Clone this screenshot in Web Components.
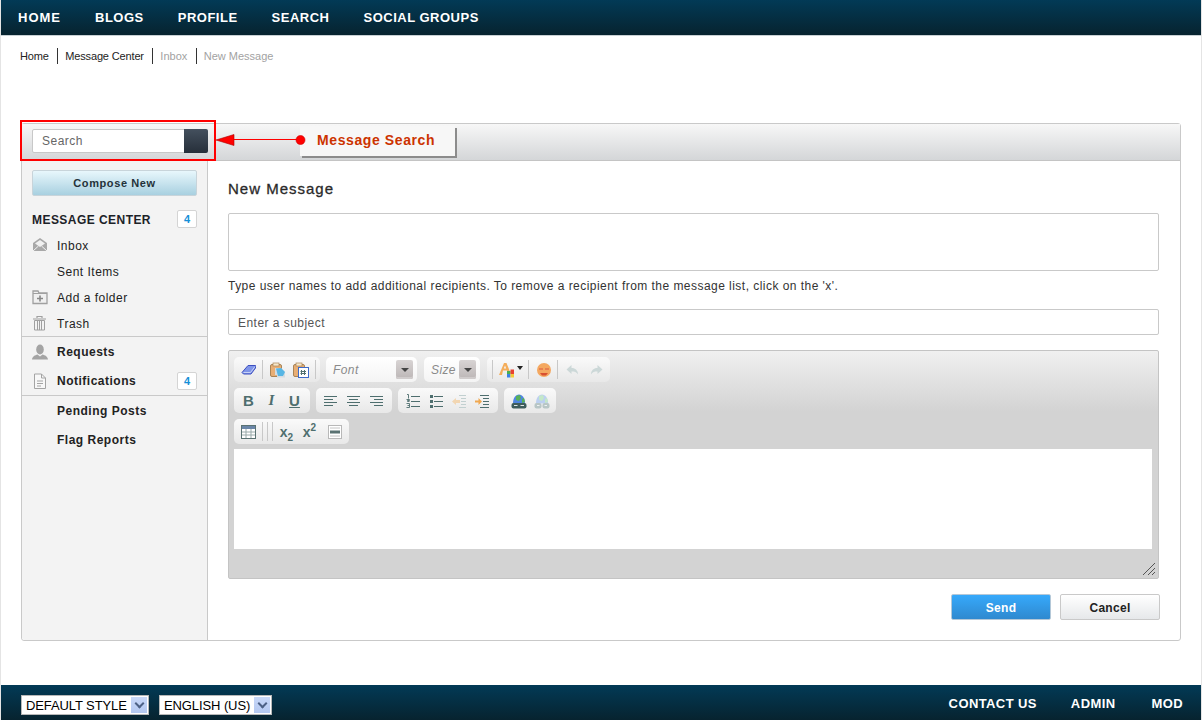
<!DOCTYPE html>
<html lang="en">
<head>
<meta charset="utf-8">
<title>New Message</title>
<style>
  html, body { margin: 0; height: 100%; }
  body {
    font-family: "Liberation Sans", Arial, sans-serif;
    font-size: 12px;
    color: #333;
    background: #fff;
    overflow: hidden;
  }
</style>
</head>
<body>
<app-shell>
  <app-nav slot="top" links="HOME,BLOGS,PROFILE,SEARCH,SOCIAL GROUPS"></app-nav>
  <app-breadcrumb slot="top" dark="Home,Message Center" light="Inbox,New Message"></app-breadcrumb>
  <message-panel>
    <side-bar slot="side">
      <side-button>Compose New</side-button>
      <side-row heading badge="4">MESSAGE CENTER</side-row>
      <side-row icon="inbox">Inbox</side-row>
      <side-row>Sent Items</side-row>
      <side-row icon="folder">Add a folder</side-row>
      <side-row icon="trash">Trash</side-row>
      <side-rule></side-rule>
      <side-row strong icon="user">Requests</side-row>
      <side-row strong icon="doc" badge="4">Notifications</side-row>
      <side-rule></side-rule>
      <side-row strong>Pending Posts</side-row>
      <side-row strong>Flag Reports</side-row>
    </side-bar>
    <compose-form>
      <rich-editor></rich-editor>
    </compose-form>
  </message-panel>
  <app-footer slot="footer"></app-footer>
</app-shell>

<script>
// small helper so every component is set up the same way
function shadow(el, html) {
  const root = el.attachShadow({ mode: 'open' });
  root.innerHTML = html;
  return root;
}

/* Toolbar and sidebar icons, all on a 16x16 grid */
const ICONS = {
  eraser: '<path d="M1 10.500 7 3.500h7.500V6L10 12H2.500z" fill="#7f95e8" stroke="#3d4fc0" stroke-linejoin="round"/><path d="M2.500 10.500h7L14 4.500" fill="none" stroke="#c8d2f6"/>',
  paste: '<rect x=".5" y="2.500" width="11" height="12" rx="1.500" fill="#e8ae74" stroke="#a88458"/><rect x="3" y="1" width="6" height="3" fill="#f6e8cc" stroke="#a88458" stroke-width=".7"/><path d="M5 6h6l4 4v5.500H7V13H5z" fill="#d4dce2"/><path d="M6 6.500l5-.5 4 4-2 4H8z" fill="#58b6e4"/>',
  pasteword: '<rect x=".5" y="2.500" width="11" height="12" rx="1.500" fill="#e8ae74" stroke="#a88458"/><rect x="3" y="1" width="6" height="3" fill="#f6e8cc" stroke="#a88458" stroke-width=".7"/><rect x="5.500" y="5.500" width="10" height="10" fill="#fff" stroke="#3d6ac8"/><path d="M8.500 8v5M11.500 8v5M7.500 9.500h5.500M7.500 11.500h5.500" stroke="#4e6e6e" fill="none"/>',
  left: '<path d="M1 3.500h13M1 6.500h9M1 9.500h13M1 12.500h9" stroke="#4e6e6e" fill="none"/>',
  center: '<path d="M1 3.500h13M3 6.500h9M1 9.500h13M3 12.500h9" stroke="#4e6e6e" fill="none"/>',
  right: '<path d="M1 3.500h13M5 6.500h9M1 9.500h13M5 12.500h9" stroke="#4e6e6e" fill="none"/>',
  numbered: '<path d="M6 3.500h9M6 8.500h9M6 13.500h9" stroke="#4e6e6e" fill="none"/><path d="M2 1.500h1.500v4M1.500 6.500h3v1h-2v1h2M1.500 10.500h3v4h-3M2.500 12.500h2" stroke="#4e6e6e" stroke-width=".9" fill="none"/>',
  bullets: '<path d="M6 3.500h9M6 8.500h9M6 13.500h9" stroke="#4e6e6e" fill="none"/><path d="M2 2h3v3H2zM2 7h3v3H2zM2 12h3v3H2z" fill="#4e6e6e"/>',
  outdent: '<path d="M8 2.500h7M10 5.500h5M10 8.500h5M10 11.500h5M8 14.500h7" stroke="#c2d0d0" fill="none"/><path d="M1 8.500 5 5v2h4v3H5v2z" fill="#f2d6b2"/>',
  indent: '<path d="M6 2.500h9M9 5.500h6M9 8.500h6M9 11.500h6M6 14.500h9" stroke="#4e6e6e" fill="none"/><path d="M8 8.500 4.500 5v2.500H1v2h3.500V12z" fill="#f0a850"/>',
  link: '<path d="M2 10.500c0-5.500 2.500-9 6-9s6 3.500 6 9z" fill="#4f86e0"/><path d="M5 3l4-1 1 3-2 3-3-1zM11 6l2-1 1 4-3 1z" fill="#58b058"/><rect x=".5" y="10" width="15" height="5.500" rx="2" fill="#3e5c5c"/><path d="M3 12.500h3.500M9.500 12.500H13" stroke="#dfe6e6" stroke-width="1.200"/>',
  unlink: '<path d="M2 10.500c0-5.500 2.500-9 6-9s6 3.500 6 9z" fill="#bcd0f0"/><path d="M5 3l4-1 1 3-2 3-3-1zM11 6l2-1 1 4-3 1z" fill="#c4e8c8"/><rect x=".5" y="10" width="7" height="5.500" rx="2" fill="#b8c6c6"/><rect x="8.500" y="10" width="7" height="5.500" rx="2" fill="#b8c6c6"/><path d="M3 12.500h2.500M10.500 12.500H13" stroke="#eef2f2" stroke-width="1.200"/>',
  table: '<rect x=".5" y="1.500" width="14" height="13" fill="#fff" stroke="#5a7272"/><rect x="1" y="2" width="13" height="3" fill="#6a86a8"/><path d="M1 8h13M1 11h13M5 5v9M10 5v9" stroke="#9aaaaa" fill="none"/>',
  rule: '<rect x="1.500" y="1.500" width="13" height="13" fill="#fff" stroke="#b8b8b8"/><rect x="3" y="6.500" width="10" height="3" fill="#5a7272"/><path d="M3 4h10M3 12h10" stroke="#c4c4c4"/>',
  smile: '<circle cx="8" cy="8" r="7" fill="#f4a860"/><path d="M3 6h4v2H3zM9 6h4v2H9z" fill="#e88050"/><path d="M4 11h8l-2 2.500H6z" fill="#d85030"/>',
  undo: '<path d="M6.500 3 1.500 7.500 6.500 12V9.500c3 0 5 .5 6.500 3 0-4-2.500-6.500-6.500-6.500z" fill="#ccd8d8"/>',
  redo: '<path d="M9.500 3l5 4.500-5 4.500V9.500c-3 0-5 .5-6.500 3 0-4 2.500-6.500 6.500-6.500z" fill="#ccd8d8"/>',
  inbox: '<path d="M1 6 8 1l7 5v8H1z" fill="#a8a8a8"/><path d="M3 6.500 8 3l5 3.500L8 10z" fill="#f0f0f0"/><path d="M1 14l5.500-5M15 14 9.500 9" stroke="#f3f3f3" fill="none"/>',
  folder: '<path d="M1 2h5l1 2h8v10.500H1z" fill="#f0f0f0" stroke="#a0a0a0" stroke-width="1.300"/><path d="M1 4.500h14" stroke="#a0a0a0"/><path d="M8 6.500v6M5 9.500h6" stroke="#888" stroke-width="1.600"/>',
  trash: '<path d="M1 4h13M5 3V1.500h5V3" fill="none" stroke="#a0a0a0" stroke-width="1.200"/><path d="M2.500 5.500h10V15h-10zM5.500 6v9M7.500 6v9M9.500 6v9" fill="none" stroke="#a0a0a0"/>',
  user: '<ellipse cx="8" cy="5.500" rx="3.800" ry="5" fill="#a4a4a4"/><path d="M0 15.500c.5-3.500 3-4 5.500-5l2.500 2 2.500-2c2.500 1 5 1.500 5.500 5z" fill="#a4a4a4"/>',
  doc: '<path d="M2.500 1h7l4 4v10.500h-11z" fill="#f8f8f8" stroke="#a4a4a4"/><path d="M9.500 1v4h4M5 8h6M5 10.500h6M5 13h4" stroke="#a4a4a4" fill="none"/>'
};

class AppShell extends HTMLElement {
  constructor() {
    super();
    shadow(this, `
      <style>
        :host {
          display: grid;
          grid-template-rows: auto 1fr auto;
          height: 720px;
          border-left: 1px solid #e4e4e4;
          border-right: 1px solid #e4e4e4;
          box-sizing: border-box;
          background: #fff;
        }
        main { padding: 59px 20px 0 20px; }
      </style>
      <div><slot name="top"></slot></div>
      <main><slot></slot></main>
      <slot name="footer"></slot>
    `);
  }
}

class AppNav extends HTMLElement {
  connectedCallback() {
    const links = this.getAttribute('links').split(',').map(t => `<a>${t}</a>`).join('');
    shadow(this, `
      <style>
        :host {
          display: flex;
          gap: 34px;
          height: 35px;
          align-items: center;
          padding-left: 17px;
          background: linear-gradient(#023a56, #07232f);
          border-bottom: 1px solid #c8d0d4;
          box-sizing: content-box;
          color: #fff;
          font: bold 13px "Liberation Sans", Arial, sans-serif;
          letter-spacing: .5px;
        }
        a:first-of-type { letter-spacing: 1px; }
      </style>
      ${links}
    `);
  }
}

class AppBreadcrumb extends HTMLElement {
  connectedCallback() {
    const crumb = (t, cls) => `<span class="${cls}">${t}</span>`;
    const dark = this.getAttribute('dark').split(',').map(t => crumb(t, 'dark'));
    const light = this.getAttribute('light').split(',').map(t => crumb(t, 'light'));
    shadow(this, `
      <style>
        :host {
          display: flex;
          height: 16px;
          margin: 12px 0 0 19px;
          font: 11px/16px "Liberation Sans", Arial, sans-serif;
          letter-spacing: -.15px;
        }
        span { padding: 0 8.5px 0 7px; border-left: 1px solid #333; }
        span:first-of-type { padding-left: 0; border-left: 0; }
        .dark { color: #222; }
        .light { color: #a2a2a2; letter-spacing: 0; }
      </style>
      ${dark.join('')}${light.join('')}
    `);
  }
}

/* Outer card: grey search strip on top, sidebar and form underneath */
class MessagePanel extends HTMLElement {
  constructor() {
    super();
    shadow(this, `
      <style>
        :host {
          display: block;
          position: relative;
          height: 518px;
          border: 1px solid #c9c9c9;
          border-radius: 3px;
          box-sizing: border-box;
        }
        .strip {
          height: 37px;
          padding: 5px 0 0 10px;
          box-sizing: border-box;
          background: linear-gradient(#f7f7f7, #d4d6d8);
          border-bottom: 1px solid #c4c4c4;
          display: flex;
        }
        .search {
          width: 176px;
          height: 24px;
          display: flex;
          box-sizing: border-box;
          background: #fff;
          border: 1px solid #c8c8c8;
          border-radius: 2px;
          font: 12px/23px "Liberation Sans", Arial, sans-serif;
          letter-spacing: .5px;
          color: #666;
        }
        .search span { flex: 1; padding-left: 9px; }
        .search b {
          width: 24px;
          background: linear-gradient(#44505e, #262f3a);
          border-radius: 0 2px 2px 0;
          margin: -1px;
        }
        .body {
          display: grid;
          grid-template-columns: 186px 1fr;
          height: 479px;
        }
        /* annotation drawn over the screenshot */
        .mark {
          position: absolute;
          left: -2px; top: -4px;
          width: 196px; height: 41px;
          border: 2px solid #f00;
          box-sizing: border-box;
        }
        .callout {
          position: absolute;
          left: 278px; top: 2px;
          width: 155px; height: 30px;
          box-sizing: border-box;
          padding-left: 17px;
          background: #f7f7f7;
          box-shadow: 2px 2px 0 #8c8c8c;
          color: #cc3300;
          font: bold 14px/28px "Liberation Sans", Arial, sans-serif;
          letter-spacing: .6px;
        }
        .arrow { position: absolute; left: 194px; top: 6px; }
      </style>
      <div class="strip">
        <div class="search"><span>Search</span><b></b></div>
      </div>
      <div class="body">
        <slot name="side"></slot>
        <slot></slot>
      </div>
      <div class="mark"></div>
      <div class="callout">Message Search</div>
      <svg class="arrow" width="92" height="20" viewBox="0 0 92 20">
        <path d="M0 10 18 4.500v11z" fill="#f00" stroke="#a00" stroke-width=".6"/>
        <path d="M18 9.500h66" stroke="#f00" fill="none"/>
        <circle cx="84.500" cy="10" r="4.500" fill="#f00" stroke="#c00" stroke-width=".6"/>
      </svg>
    `);
  }
}

class SideBar extends HTMLElement {
  constructor() {
    super();
    shadow(this, `
      <style>
        :host {
          display: block;
          background: #f3f3f3;
          border-right: 1px solid #c9c9c9;
          padding-top: 9px;
          border-radius: 0 0 0 3px;
        }
      </style>
      <slot></slot>
    `);
  }
}

class SideButton extends HTMLElement {
  constructor() {
    super();
    shadow(this, `
      <style>
        :host {
          display: block;
          height: 26px;
          margin: 0 10px 10px 10px;
          box-sizing: border-box;
          border: 1px solid #c8d4da;
          border-radius: 2px;
          background: linear-gradient(#e8f7fc, #a8d0e0);
          text-align: center;
          color: #24323a;
          font: bold 11px/24px "Liberation Sans", Arial, sans-serif;
          letter-spacing: .6px;
        }
      </style>
      <slot></slot>
    `);
  }
}

class SideRow extends HTMLElement {
  connectedCallback() {
    const icon = this.getAttribute('icon');
    const badge = this.getAttribute('badge');
    const heading = this.hasAttribute('heading');
    const strong = this.hasAttribute('strong');
    shadow(this, `
      <style>
        :host {
          display: flex;
          align-items: center;
          height: ${strong ? 29 : 26}px;
          margin: 0 10px;
          color: #222;
          font: ${strong ? 'bold ' : ''}12px "Liberation Sans", Arial, sans-serif;
          letter-spacing: .5px;
        }
        .ico { width: 25px; flex: none; height: 16px; }
        .ico svg { display: block; }
        .txt { flex: 1; padding-top: 1px; }
        :host([heading]) { font: bold 12px "Liberation Sans", Arial, sans-serif; letter-spacing: .45px; color: #1c2228; }
        .badge {
          width: 20px; height: 18px;
          box-sizing: border-box;
          border: 1px solid #d4d4d4;
          border-radius: 2px;
          background: #fff;
          color: #1590d8;
          font: bold 11px/16px "Liberation Sans", Arial, sans-serif;
          letter-spacing: 0;
          text-align: center;
        }
      </style>
      ${heading ? '' : `<span class="ico">${icon ? `<svg width="16" height="16" viewBox="0 0 16 16">${ICONS[icon]}</svg>` : ''}</span>`}
      <span class="txt"><slot></slot></span>
      ${badge ? `<span class="badge">${badge}</span>` : ''}
    `);
  }
}

class SideRule extends HTMLElement {
  constructor() {
    super();
    shadow(this, `
      <style>
        :host { display: block; height: 1px; background: #c9c9c9; }
      </style>
    `);
  }
}

class ComposeForm extends HTMLElement {
  constructor() {
    super();
    shadow(this, `
      <style>
        :host {
          display: block;
          padding: 18px 21px 0 20px;
          font: 12px "Liberation Sans", Arial, sans-serif;
          letter-spacing: .46px;
          color: #333;
        }
        h2 {
          margin: 0;
          height: 19px;
          font: normal 15px/19px "Liberation Sans", Arial, sans-serif;
          letter-spacing: 1px;
          -webkit-text-stroke: .3px #2a2a2a;
          color: #2a2a2a;
        }
        .field {
          box-sizing: border-box;
          background: #fff;
          border: 1px solid #c9c9c9;
          border-radius: 2px;
        }
        .to { height: 58px; margin-top: 15px; }
        .help { height: 38px; line-height: 30px; color: #333; }
        .subject { height: 26px; line-height: 26px; padding-left: 9px; margin-bottom: 15px; color: #555; }
        .actions {
          display: flex;
          justify-content: flex-end;
          gap: 9px;
          margin: 15px -1px 0 0;
        }
        .btn {
          width: 100px; height: 26px;
          box-sizing: border-box;
          border-radius: 2px;
          text-align: center;
          font: bold 12px/26px "Liberation Sans", Arial, sans-serif;
          letter-spacing: .3px;
        }
        .send { background: linear-gradient(#36a9fb, #2f89cf); border: 1px solid #b4c8d8; color: #fff; }
        .cancel { background: linear-gradient(#fff, #e6e8ea); border: 1px solid #c9c9c9; color: #222; }
      </style>
      <h2>New Message</h2>
      <div class="field to"></div>
      <div class="help">Type user names to add additional recipients. To remove a recipient from the message list, click on the 'x'.</div>
      <div class="field subject">Enter a subject</div>
      <slot></slot>
      <div class="actions">
        <div class="btn send">Send</div>
        <div class="btn cancel">Cancel</div>
      </div>
    `);
  }
}

/* One button in the editor toolbar. Without an icon it shows what is slotted in */
class ToolButton extends HTMLElement {
  connectedCallback() {
    const name = this.getAttribute('icon');
    const w = this.getAttribute('w') || 23;
    const inner = name
      ? `<svg width="16" height="16" viewBox="0 0 16 16">${ICONS[name]}</svg>`
      : `<slot></slot>`;
    shadow(this, `
      <style>
        :host {
          display: flex;
          align-items: center;
          justify-content: center;
          width: ${w}px;
          height: 25px;
          color: #4e6e6e;
          font: bold 15px "Liberation Sans", Arial, sans-serif;
        }
        svg { display: block; }
      </style>
      ${inner}
    `);
  }
}

class ToolGroup extends HTMLElement {
  constructor() {
    super();
    shadow(this, `
      <style>
        :host {
          display: flex;
          align-items: center;
          height: 25px;
          padding: 0 3px;
          border-radius: 5px;
          background: linear-gradient(#fafafa, #e8e8e8);
        }
      </style>
      <slot></slot>
    `);
  }
}

class ToolSep extends HTMLElement {
  connectedCallback() {
    const lines = Number(this.getAttribute('lines') || 1);
    shadow(this, `
      <style>
        :host {
          display: flex;
          gap: 4px;
          height: 19px;
          padding: 0 3px 0 2px;
        }
        i { display: block; width: 1px; background: #c8c8c8; }
      </style>
      ${'<i></i>'.repeat(lines)}
    `);
  }
}

class ToolCombo extends HTMLElement {
  connectedCallback() {
    const w = this.getAttribute('w');
    shadow(this, `
      <style>
        :host {
          display: flex;
          align-items: center;
          justify-content: space-between;
          width: ${w}px;
          height: 25px;
          box-sizing: border-box;
          padding: 0 4px 0 7px;
          border-radius: 5px;
          background: linear-gradient(#fff, #f4f4f4);
          color: #8a8a8a;
          font: italic 12px "Liberation Sans", Arial, sans-serif;
          letter-spacing: .4px;
        }
        b {
          display: flex;
          align-items: center;
          justify-content: center;
          width: 17px;
          height: 19px;
          border-radius: 2px;
          background: linear-gradient(#d8d4d4, #bcb6b6);
          box-shadow: inset 0 -2px 0 #d0cccc;
        }
        b::after {
          content: "";
          border: 4px solid transparent;
          border-top-color: #444;
          border-bottom-width: 0;
        }
      </style>
      <slot></slot><b></b>
    `);
  }
}

class RichEditor extends HTMLElement {
  constructor() {
    super();
    shadow(this, `
      <style>
        :host {
          display: block;
          height: 229px;
          box-sizing: border-box;
          padding: 6px 6px 0 5px;
          border: 1px solid #c4c4c4;
          border-radius: 2px;
          position: relative;
          background: linear-gradient(#f0f0f0, #d3d3d3 60px);
          letter-spacing: 0;
        }
        .row { display: flex; gap: 6px; margin-bottom: 6px; }
        .area { height: 100px; margin: -1px 0 0; background: #fff; width: 918px; }
        .sub { font-size: 14px; }
        .sub sub, .sub sup { font-size: 10px; line-height: 0; }
        .caret {
          width: 0; height: 0;
          border: 3px solid transparent;
          border-top: 4px solid #222;
          border-bottom: 0;
          margin: 0 0 3px 2px;
        }
        .ital { font: italic bold 15px "Liberation Serif", serif; }
        .grip { position: absolute; right: 1px; bottom: 1px; }
      </style>
      <div class="row">
        <tool-group>
          <tool-button icon="eraser"></tool-button>
          <tool-sep></tool-sep>
          <tool-button icon="paste"></tool-button>
          <tool-button icon="pasteword"></tool-button>
          <tool-sep style="padding:0 1px 0 3px"></tool-sep>
        </tool-group>
        <tool-combo w="91">Font</tool-combo>
        <tool-combo w="56" style="margin-left:1px">Size</tool-combo>
        <tool-group style="margin-left:1px">
          <tool-sep></tool-sep>
          <tool-button w="30"><svg width="16" height="16" viewBox="0 0 16 16"><path d="M0 13 5 1h2.500l4 10H9l-1-2.500H4L3 13zM4.800 6.500h2.400L6 3.500z" fill="#f4ad5a"/><path d="M8 9h3.500v3H8z" fill="#4caf50"/><path d="M11.500 7.500H15V12h-3.500z" fill="#e84030"/><path d="M8 12h3.500v3.500H8z" fill="#3a80e8"/><path d="M11.500 12H15v3.500h-3.500z" fill="#f4c838"/></svg><span class="caret"></span></tool-button>
          <tool-sep></tool-sep>
          <tool-button icon="smile"></tool-button>
          <tool-sep></tool-sep>
          <tool-button icon="undo"></tool-button>
          <tool-button icon="redo"></tool-button>
        </tool-group>
      </div>
      <div class="row">
        <tool-group style="padding-right:4px">
          <tool-button>B</tool-button>
          <tool-button><span class="ital">I</span></tool-button>
          <tool-button><u>U</u></tool-button>
        </tool-group>
        <tool-group style="padding-right:4px">
          <tool-button icon="left"></tool-button>
          <tool-button icon="center"></tool-button>
          <tool-button icon="right"></tool-button>
        </tool-group>
        <tool-group style="padding-right:5px">
          <tool-button icon="numbered"></tool-button>
          <tool-button icon="bullets"></tool-button>
          <tool-button icon="outdent"></tool-button>
          <tool-button icon="indent"></tool-button>
        </tool-group>
        <tool-group>
          <tool-button icon="link"></tool-button>
          <tool-button icon="unlink"></tool-button>
        </tool-group>
      </div>
      <div class="row">
        <tool-group>
          <tool-button icon="table"></tool-button>
          <tool-sep lines="3" style="padding:0 2px"></tool-sep>
          <tool-button><span class="sub">x<sub>2</sub></span></tool-button>
          <tool-button><span class="sub">x<sup>2</sup></span></tool-button>
          <tool-button icon="rule" style="margin-left:2px"></tool-button>
        </tool-group>
      </div>
      <div class="area"></div>
      <svg class="grip" width="16" height="16" viewBox="0 0 16 16">
        <path d="M2 14 14 2M7 14l7-7M11 14l3-3" stroke="#555" fill="none"/>
      </svg>
    `);
  }
}

class AppFooter extends HTMLElement {
  constructor() {
    super();
    const pick = (t, w) => `<span class="pick" style="width:${w}px"><span>${t}</span><b></b></span>`;
    shadow(this, `
      <style>
        :host {
          display: flex;
          justify-content: space-between;
          height: 35px;
          padding: 0 18px 0 20px;
          background: linear-gradient(#023a56, #07232f);
          color: #fff;
          font: bold 13px/37px "Liberation Sans", Arial, sans-serif;
          letter-spacing: .4px;
        }
        .left { display: flex; gap: 10px; padding-top: 10px; }
        .right { display: flex; gap: 34px; }
        .right span:last-child { margin-left: 2px; }
        .pick {
          display: flex;
          align-items: center;
          justify-content: space-between;
          height: 20px;
          box-sizing: border-box;
          padding: 0 1px 0 4px;
          background: #fff;
          border: 1px solid #b8b8b8;
          color: #000;
          font: 13px "Liberation Sans", Arial, sans-serif;
          letter-spacing: -.1px;
          white-space: nowrap;
        }
        .pick b {
          width: 16px; height: 16px;
          background: linear-gradient(#c8d8f8, #b4c8f0);
          display: flex; align-items: center; justify-content: center;
        }
        .pick b::after {
          content: "";
          width: 5px; height: 5px;
          margin-top: -3px;
          border: solid #4d6185;
          border-width: 0 2px 2px 0;
          transform: rotate(45deg);
        }
      </style>
      <div class="left">${pick('DEFAULT STYLE', 128)}${pick('ENGLISH (US)', 113)}</div>
      <div class="right"><span>CONTACT US</span><span>ADMIN</span><span>MOD</span></div>
    `);
  }
}

customElements.define('app-shell', AppShell);
customElements.define('app-nav', AppNav);
customElements.define('app-breadcrumb', AppBreadcrumb);
customElements.define('message-panel', MessagePanel);
customElements.define('side-bar', SideBar);
customElements.define('side-button', SideButton);
customElements.define('side-row', SideRow);
customElements.define('side-rule', SideRule);
customElements.define('compose-form', ComposeForm);
customElements.define('tool-button', ToolButton);
customElements.define('tool-group', ToolGroup);
customElements.define('tool-sep', ToolSep);
customElements.define('tool-combo', ToolCombo);
customElements.define('rich-editor', RichEditor);
customElements.define('app-footer', AppFooter);
</script>
</body>
</html>
